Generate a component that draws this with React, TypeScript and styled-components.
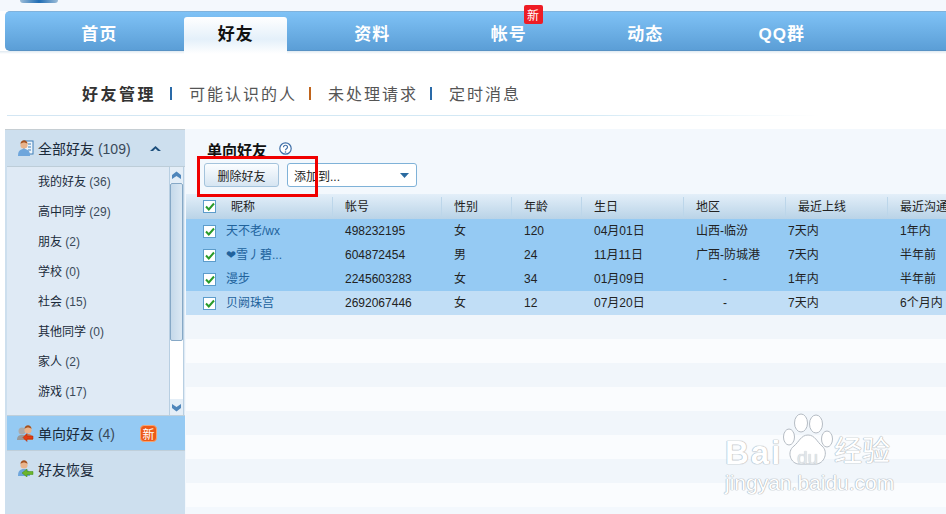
import React from "react";
import styled, { createGlobalStyle } from "styled-components";

const Global = createGlobalStyle`
  html, body { margin: 0; padding: 0; background: #fff; }
  body { font-family: "Liberation Sans", "Noto Sans CJK SC", sans-serif; }
  * { box-sizing: border-box; }
`;

const Page = styled.div`
  position: relative;
  width: 946px;
  height: 514px;
  overflow: hidden;
  background: #fff;
`;
const TopStrip = styled.div`
  height: 11px;
  padding-left: 20px;
  background: #f4f8fd;
  overflow: hidden;
`;
const LogoArc = styled.div`
  width: 38px;
  height: 3px;
  border-radius: 0 0 19px 19px;
  background: linear-gradient(90deg, #9bbcd8, #1f6db5 50%, #9bbcd8);
`;
const Nav = styled.nav`
  display: flex;
  height: 40px;
  margin-left: 5px;
  padding-left: 26px;
  border-radius: 5px 0 0 5px;
  background: linear-gradient(#7fc2f6, #5b9ed6);
  border-top: 1px solid #80b2dc;
  border-bottom: 1px solid #5892c4;
`;
const Tab = styled.div<{ $active?: boolean }>`
  position: relative;
  flex: 0 0 136.5px;
  height: 36px;
  display: flex;
  justify-content: center;
  ${(p) => (p.$active ? "margin-top: 5px;" : "padding-top: 4px;")}
`;
const TabLabel = styled.span<{ $active?: boolean }>`
  display: flex;
  align-items: center;
  justify-content: center;
  width: 103px;
  height: ${(p) => (p.$active ? "37px" : "32px")};
  padding-bottom: ${(p) => (p.$active ? "7px" : "0")};
  font-size: 17px;
  font-weight: 700;
  letter-spacing: 1px;
  color: ${(p) => (p.$active ? "#111" : "#fff")};
  ${(p) =>
    p.$active
      ? "background: linear-gradient(#ffffff, #e4f0fa 60%, #ffffff); border-radius: 3px 3px 0 0;"
      : ""}
`;
const NewFlag = styled.span`
  position: absolute;
  left: 83px;
  top: -7px;
  width: 19px;
  height: 19px;
  display: flex;
  align-items: center;
  justify-content: center;
  background: #ee1c25;
  color: #fff;
  font-size: 12px;
  border-radius: 2px;
`;
const NavShadow = styled.div`
  height: 3px;
  background: linear-gradient(#dfe9f1, #fff);
`;
const SubNav = styled.div`
  display: flex;
  align-items: center;
  height: 61px;
  padding: 16px 0 0 82px;
  font-size: 16px;
  color: #555;
  letter-spacing: 2px;
`;
const SubItem = styled.span<{ $on?: boolean }>`
  font-weight: ${(p) => (p.$on ? 700 : 400)};
  color: ${(p) => (p.$on ? "#333" : "#555")};
  ${(p) => (p.$on ? "letter-spacing: 2.5px; margin-right: 2px;" : "")}
`;
const Sep = styled.i<{ $c: string }>`
  width: 2px;
  height: 13px;
  margin: 2px 17px 0 12px;
  background: ${(p) => p.$c};
`;
const SubRule = styled.div`
  height: 1px;
  margin-left: 7px;
  width: 813px;
  background: linear-gradient(90deg, #d3e6f3, #d3e9f5 70%, #fff);
`;
const Body = styled.div`
  display: flex;
  margin: 13px 0 0 5px;
  height: 385px;
`;
const Side = styled.aside`
  width: 180px;
  background: #cddfee;
  border-top: 1px solid #c6ced3;
  font-size: 14px;
  color: #1a2a3a;
`;
const SideHead = styled.div`
  display: flex;
  align-items: center;
  height: 36px;
  padding-left: 12px;
  gap: 4px;
  position: relative;
`;
const Count = styled.span`
  color: #3a4a5a;
`;
const Chevron = styled.svg`
  margin-left: 15px;
`;
const ListWrap = styled.div`
  display: flex;
  height: 249px;
  margin-left: 2px;
  background: #dfeaf5;
  border-top: 1px solid #bdcdd8;
`;
const List = styled.ul`
  flex: 1;
  list-style: none;
  margin: 0;
  padding: 1px 0 0 31px;
`;
const ListItem = styled.li`
  height: 30px;
  line-height: 29px;
  font-size: 12px;
  color: #1a2a3a;
`;
const Bar = styled.div`
  display: flex;
  flex-direction: column;
  width: 15px;
  margin-right: 1px;
  background: #fff;
  border-left: 1px solid #b8cfe2;
  border-right: 1px solid #b8cfe2;
`;
const BarBtn = styled.div`
  height: 16px;
  display: flex;
  align-items: center;
  justify-content: center;
  background: #e4eef7;
`;
const Thumb = styled.div`
  height: 158px;
  background: linear-gradient(90deg, #c5d9ea, #dbe8f3);
  border: 1px solid #86a8c6;
  border-radius: 2px;
`;
const BarFill = styled.div`
  flex: 1;
`;
const ActiveItem = styled.div`
  display: flex;
  align-items: center;
  gap: 4px;
  height: 36px;
  margin-left: 2px;
  padding-left: 10px;
  background: #95caf3;
  border-top: 1px solid #bfcfda;
  border-bottom: 1px solid #bfcfda;
`;
const NewBadge = styled.span`
  margin-left: 21px;
  width: 17px;
  height: 17px;
  display: flex;
  align-items: center;
  justify-content: center;
  border-radius: 4px;
  background: #ed5a17;
  border: 1px solid #f7a36f;
  color: #fff;
  font-size: 12px;
`;
const RestoreItem = styled(SideHead)`
  height: 35px;
`;
const Main = styled.main`
  flex: 1;
  min-width: 0;
  padding-left: 1px;
  background: #f3f8fd;
`;
const TitleRow = styled.div`
  display: flex;
  align-items: center;
  gap: 12px;
  height: 34px;
  padding: 6px 0 0 21px;
`;
const Title = styled.h2`
  margin: 0;
  font-size: 15px;
  font-weight: 700;
  color: #111;
`;
const HelpIcon = styled.svg`
  margin-top: -1px;
`;
const Tools = styled.div`
  display: flex;
  gap: 8px;
  height: 31px;
  padding-left: 18px;
`;
const DelBtn = styled.button`
  width: 75px;
  height: 24px;
  padding: 0;
  font: 12px "Liberation Sans", "Noto Sans CJK SC", sans-serif;
  color: #222;
  border: 1px solid #a4c3dc;
  border-radius: 3px;
  background: linear-gradient(#fbfdff, #d6e5f2);
`;
const Select = styled.div`
  display: flex;
  align-items: center;
  justify-content: space-between;
  width: 130px;
  height: 24px;
  padding: 0 7px 0 6px;
  font-size: 12px;
  color: #222;
  border: 1px solid #7fb2d8;
  border-radius: 3px;
  background: #fff;
`;
const columns = "146px 109px 70px 70px 102px 102px 102px 60px";
const HeadRow = styled.div`
  display: grid;
  grid-template-columns: ${columns};
  height: 25px;
  align-items: center;
  background: linear-gradient(#e3eff9, #b9d3e7);
  font-size: 12px;
  line-height: 16px;
  color: #222;
  white-space: nowrap;
`;
const HeadCell = styled.div`
  display: flex;
  align-items: center;
  height: 20px;
  padding-left: 12px;
  border-left: 1px solid #bcd6ea;
  &:first-child {
    padding-left: 17px;
    gap: 15px;
    border-left: 0;
  }
`;
const Row = styled.div<{ $bg: string }>`
  display: grid;
  grid-template-columns: ${columns};
  height: 24px;
  align-items: center;
  background: ${(p) => p.$bg};
  font-size: 12px;
  line-height: 16px;
  color: #222;
  white-space: nowrap;
`;
const NameCell = styled.div`
  display: flex;
  align-items: center;
  gap: 10px;
  padding-left: 17px;
  color: #21629c;
`;
const Cell = styled.div<{ $pad?: number; $center?: boolean }>`
  padding-left: ${(p) => p.$pad ?? 13}px;
  ${(p) => (p.$center ? "text-align: center; padding-left: 0; padding-right: 18px;" : "")}
`;
const Check = styled.span`
  display: flex;
  align-items: center;
  justify-content: center;
  width: 13px;
  height: 13px;
  background: #fff;
  border: 1px solid #5c9ccb;
`;
const Stripe = styled.div<{ $odd: boolean }>`
  height: 24px;
  background: ${(p) => (p.$odd ? "#f1f6fb" : "#fafcfe")};
`;
const RedBox = styled.div`
  position: absolute;
  left: 197px;
  top: 156px;
  width: 121px;
  height: 41px;
  border: 3px solid #f00000;
  pointer-events: none;
`;
const Mark = styled.div`
  position: absolute;
  left: 725px;
  top: 413px;
  width: 175px;
  height: 80px;
  pointer-events: none;
`;
const MarkPaw = styled.svg`
  position: absolute;
  left: 58px;
  top: 0;
`;
const MarkWord = styled.span<{ $l: number; $t: number; $s: number; $bold?: boolean; $track?: number }>`
  position: absolute;
  left: ${(p) => p.$l}px;
  top: ${(p) => p.$t}px;
  font-size: ${(p) => p.$s}px;
  line-height: 1;
  font-weight: ${(p) => (p.$bold ? 700 : 400)};
  letter-spacing: ${(p) => p.$track ?? 0}px;
  color: #ffffff;
  white-space: nowrap;
  text-shadow: 0 0 1px #aab2ba, 0 0 1px #aab2ba, 0 0 1px #aab2ba;
`;
const MarkDu = styled.span`
  position: absolute;
  left: 72px;
  top: 35px;
  font-size: 19px;
  line-height: 1;
  color: #e2e6ea;
  text-shadow: 0 0 1px #b5bcc4;
`;

const PersonIcon = ({ card, arrow, gray }: { card?: boolean; arrow?: string; gray?: boolean }) => (
  <svg width="17" height="17" viewBox="0 0 17 17">
    {card && <rect x="7" y="1" width="9" height="13" fill="#eef5fb" stroke="#3f7fb8" />}
    {card && <path d="M11 4h3M11 7h3M11 10h3" stroke="#3f7fb8" />}
    {gray && <circle cx="5" cy="6" r="3.5" fill="#aaa" />}
    {gray && <path d="M0 15c0-4 2-5 5-5s5 1 5 5z" fill="#999" />}
    <circle cx={gray ? 11 : 7} cy="5" r="3.6" fill="#e9b48c" />
    <path d={gray ? "M7.500 4c0-5 7-5 7 0-2-2-5-2-7 0z" : "M3.500 4c0-5 7-5 7 0-2-2-5-2-7 0z"} fill="#a5521f" />
    <path
      d={gray ? "M7 15c0-4 1-6 4-6s5 2 5 6z" : "M1 16c0-5 2-7 6-7s6 2 6 7z"}
      fill={gray ? "#c9805a" : "#6ea6dc"}
    />
    {arrow && (
      <path
        d={arrow === "#e43d12" ? "M16 11v3h-6v2.500L6 12.500 10 8.500V11z" : "M16 11.500v3h-6v2.500l-5-4 5-4v2.500z"}
        fill={arrow}
        stroke={arrow === "#e43d12" ? "#a92a08" : "#3f8f12"}
        strokeWidth=".5"
      />
    )}
  </svg>
);

const Tick = () => (
  <Check>
    <svg width="10" height="9" viewBox="0 0 10 9">
      <path d="M1 4.500 3.800 7.500 9 1.500" fill="none" stroke="#2a9a2a" strokeWidth="2" />
    </svg>
  </Check>
);

const Arrow = ({ down }: { down?: boolean }) => (
  <svg width="9" height="9" viewBox="0 0 9 9">
    <path
      d={down ? "M0 1 4.500 4 9 1v4L4.500 8.500 0 5z" : "M0 8 4.500 5 9 8V4L4.500 .5 0 4z"}
      fill="#4f86bb"
    />
  </svg>
);

const tabs = ["首页", "好友", "资料", "帐号", "动态", "QQ群"];
const groups: [string, number][] = [
  ["我的好友", 36],
  ["高中同学", 29],
  ["朋友", 2],
  ["学校", 0],
  ["社会", 15],
  ["其他同学", 0],
  ["家人", 2],
  ["游戏", 17],
];
const rows = [
  { name: "天不老/wx", id: "498232195", sex: "女", age: "120", day: "04月01日", area: "山西-临汾", on: "7天内", talk: "1年内", bg: "#95caf3" },
  { name: "❤雪丿碧...", id: "604872454", sex: "男", age: "24", day: "11月11日", area: "广西-防城港", on: "7天内", talk: "半年前", bg: "#95caf3" },
  { name: "漫步", id: "2245603283", sex: "女", age: "34", day: "01月09日", area: "-", on: "1年内", talk: "半年前", bg: "#95caf3" },
  { name: "贝阙珠宫", id: "2692067446", sex: "女", age: "12", day: "07月20日", area: "-", on: "7天内", talk: "6个月内", bg: "#c1def6" },
];
const heads = ["帐号", "性别", "年龄", "生日", "地区", "最近上线", "最近沟通"];

export default function App() {
  return (
    <Page>
      <Global />
      <TopStrip>
        <LogoArc />
      </TopStrip>
      <Nav>
        {tabs.map((t) => (
          <Tab key={t} $active={t === "好友"}>
            <TabLabel $active={t === "好友"}>{t}</TabLabel>
            {t === "帐号" && <NewFlag>新</NewFlag>}
          </Tab>
        ))}
      </Nav>
      <NavShadow />
      <SubNav>
        <SubItem $on>好友管理</SubItem>
        <Sep $c="#2a6aa8" />
        <SubItem>可能认识的人</SubItem>
        <Sep $c="#c0641c" />
        <SubItem>未处理请求</SubItem>
        <Sep $c="#2a6aa8" />
        <SubItem>定时消息</SubItem>
      </SubNav>
      <SubRule />
      <Body>
        <Side>
          <SideHead>
            <PersonIcon card />
            <span>
              全部好友 <Count>(109)</Count>
            </span>
            <Chevron width="11" height="7" viewBox="0 0 11 7">
              <path d="M0 6 5.500 1 11 6H8L5.500 3.500 3 6z" fill="#1d4f7c" />
            </Chevron>
          </SideHead>
          <ListWrap>
            <List>
              {groups.map(([n, c]) => (
                <ListItem key={n}>
                  {n} <Count>({c})</Count>
                </ListItem>
              ))}
            </List>
            <Bar>
              <BarBtn>
                <Arrow />
              </BarBtn>
              <Thumb />
              <BarFill />
              <BarBtn>
                <Arrow down />
              </BarBtn>
            </Bar>
          </ListWrap>
          <ActiveItem>
            <PersonIcon gray arrow="#e43d12" />
            <span>
              单向好友 <Count>(4)</Count>
            </span>
            <NewBadge>新</NewBadge>
          </ActiveItem>
          <RestoreItem>
            <PersonIcon arrow="#6cb52c" />
            <span>好友恢复</span>
          </RestoreItem>
        </Side>
        <Main>
          <TitleRow>
            <Title>单向好友</Title>
            <HelpIcon width="13" height="13" viewBox="0 0 13 13">
              <circle cx="6.500" cy="6.500" r="5.700" fill="#fff" stroke="#3f6fa8" strokeWidth="1.200" />
              <path
                d="M4.500 5.200c0-2.600 4-2.600 4 0 0 1.500-2 1.500-2 3"
                fill="none"
                stroke="#3f6fa8"
                strokeWidth="1.200"
              />
              <circle cx="6.500" cy="10" r=".8" fill="#3f6fa8" />
            </HelpIcon>
          </TitleRow>
          <Tools>
            <DelBtn>删除好友</DelBtn>
            <Select>
              <span>添加到...</span>
              <svg width="9" height="5" viewBox="0 0 9 5">
                <path d="M0 0h9L4.500 5z" fill="#2a6aa0" />
              </svg>
            </Select>
          </Tools>
          <HeadRow>
            <HeadCell>
              <Tick />
              <span>昵称</span>
            </HeadCell>
            {heads.map((h) => (
              <HeadCell key={h}>{h}</HeadCell>
            ))}
          </HeadRow>
          {rows.map((r) => (
            <Row key={r.id} $bg={r.bg}>
              <NameCell>
                <Tick />
                <span>{r.name}</span>
              </NameCell>
              <Cell>{r.id}</Cell>
              <Cell>{r.sex}</Cell>
              <Cell>{r.age}</Cell>
              <Cell>{r.day}</Cell>
              <Cell $center={r.area === "-"}>{r.area}</Cell>
              <Cell $pad={3}>{r.on}</Cell>
              <Cell>{r.talk}</Cell>
            </Row>
          ))}
          {[0, 1, 2, 3, 4, 5, 6, 7].map((i) => (
            <Stripe key={i} $odd={i % 2 === 0} />
          ))}
        </Main>
      </Body>
      <RedBox />
      <Mark>
        <MarkPaw width="50" height="54" viewBox="0 0 50 54">
          <g fill="#fff" stroke="#b5bcc4" strokeWidth="1">
            <ellipse cx="18" cy="10" rx="6.500" ry="9" />
            <ellipse cx="33" cy="11" rx="6.500" ry="9" />
            <ellipse cx="6" cy="24" rx="5.500" ry="8" />
            <ellipse cx="44" cy="26" rx="5.500" ry="8" />
            <path d="M25 22c7 0 9 7 14 11 7 6 2 18-6 18H16C8 51 3 39 11 33c5-4 7-11 14-11z" />
          </g>
        </MarkPaw>
        <MarkWord $l={0} $t={23} $s={33} $bold $track={2}>Bai</MarkWord>
        <MarkDu>du</MarkDu>
        <MarkWord $l={109} $t={25} $s={28}>经验</MarkWord>
        <MarkWord $l={0} $t={59} $s={21}>jingyan.baidu.com</MarkWord>
      </Mark>
    </Page>
  );
}
